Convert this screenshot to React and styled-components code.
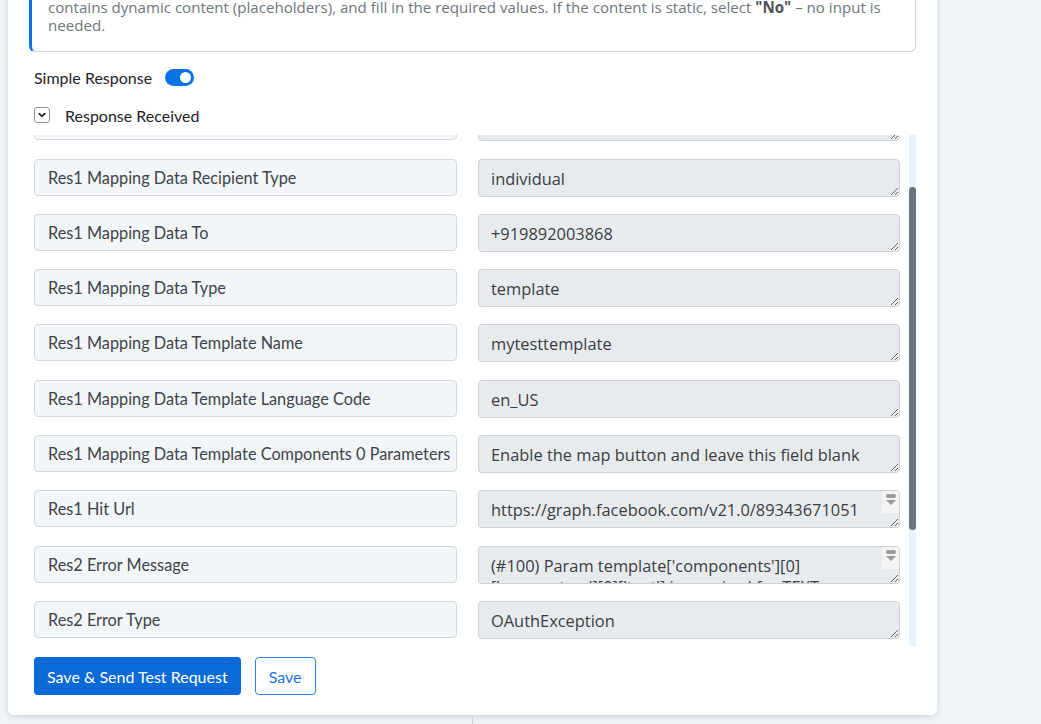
import React, { useLayoutEffect, useRef } from "react";
import styled, { createGlobalStyle } from "styled-components";

const GlobalStyle = createGlobalStyle`
  html, body {
    margin: 0;
    padding: 0;
    background: #f1f4f8;
    overflow: hidden;
  }
  body {
    font-family: Lato, "Open Sans", sans-serif;
  }
`;

const rows = [
  { label: "Res1 Mapping Data Messaging Product", value: "whatsapp" },
  { label: "Res1 Mapping Data Preview Url", value: "false" },
  { label: "Res1 Mapping Data Recipient Type", value: "individual" },
  { label: "Res1 Mapping Data To", value: "+919892003868" },
  { label: "Res1 Mapping Data Type", value: "template" },
  { label: "Res1 Mapping Data Template Name", value: "mytesttemplate" },
  { label: "Res1 Mapping Data Template Language Code", value: "en_US" },
  {
    label: "Res1 Mapping Data Template Components 0 Parameters",
    value: "Enable the map button and leave this field blank",
  },
  {
    label: "Res1 Hit Url",
    value: "https://graph.facebook.com/v21.0/89343671051",
    scroll: true,
  },
  {
    label: "Res2 Error Message",
    value:
      "(#100) Param template['components'][0]['parameters'][0]['text'] is required for TEXT parameter type",
    scroll: true,
  },
  { label: "Res2 Error Type", value: "OAuthException" },
  { label: "Res2 Error Code", value: "100" },
  { label: "Res2 Error Fbtrace Id", value: "AqW3kd8Yt2sPq0vLm1nXz9r" },
  { label: "Res2 Error Is Transient", value: "false" },
];

const App = () => {
  const listRef = useRef(null);

  useLayoutEffect(() => {
    if (listRef.current) listRef.current.scrollTop = 87;
  }, []);

  return (
    <>
      <GlobalStyle />
      <Page>
        <Card>
          <InfoBox>
            contains dynamic content (placeholders), and fill in the required
            values. If the content is static, select <b>"No"</b> – no input is
            needed.
          </InfoBox>

          <ToggleRow>
            <span>Simple Response</span>
            <Switch>
              <Knob />
            </Switch>
          </ToggleRow>

          <CollapseRow>
            <ChevronBox>
              <svg width="10" height="10" viewBox="0 0 10 10">
                <path
                  d="M2.2 3.6 L5 6.4 L7.8 3.6"
                  fill="none"
                  stroke="#1f2328"
                  strokeWidth="1.6"
                  strokeLinecap="round"
                  strokeLinejoin="round"
                />
              </svg>
            </ChevronBox>
            <span>Response Received</span>
          </CollapseRow>

          <ListFrame>
            <ListBody ref={listRef}>
              {rows.map((r) => (
                <Row key={r.label}>
                  <LabelField>{r.label}</LabelField>
                  <ValueWrap>
                    <ValueField readOnly value={r.value} rows={1} />
                    {r.scroll && (
                      <ScrollHint>
                        <svg width="14" height="14" viewBox="0 0 14 14">
                          <rect x="2" y="0" width="10" height="4" rx="2" fill="#9a9a9a" />
                          <path d="M2 6 H12 L7 11 Z" fill="#9a9a9a" />
                        </svg>
                      </ScrollHint>
                    )}
                  </ValueWrap>
                </Row>
              ))}
            </ListBody>
            <ScrollTrack>
              <ScrollThumb $top={52} $height={343} />
            </ScrollTrack>
          </ListFrame>

          <Actions>
            <PrimaryButton>Save &amp; Send Test Request</PrimaryButton>
            <OutlineButton>Save</OutlineButton>
          </Actions>
        </Card>
        <Divider />
      </Page>
    </>
  );
};

const Page = styled.div`
  padding-left: 8px;
  width: 929px;
`;

const Card = styled.div`
  margin-top: -12px;
  background: #ffffff;
  border-radius: 0 0 6px 6px;
  box-shadow: 0 2px 6px rgba(60, 80, 120, 0.18);
  padding: 0 21px 20px 21px;
`;

const InfoBox = styled.div`
  border: 1px solid #c9d1dc;
  border-left: 3px solid #0b74e5;
  border-radius: 0 0 6px 6px;
  padding: 10px 16px 17px 16px;
  font-family: "Open Sans", sans-serif;
  font-size: 15.1px;
  line-height: 17.5px;
  color: #70757c;

  b {
    color: #4d5157;
    font-weight: 700;
  }
`;

const ToggleRow = styled.div`
  display: flex;
  align-items: center;
  gap: 13px;
  margin-top: 15px;
  padding-left: 5px;
  height: 20px;
  font-size: 16px;
  color: #1f2328;
`;

const Switch = styled.div`
  width: 29px;
  height: 17px;
  border-radius: 9px;
  background: #0b74e5;
  position: relative;
`;

const Knob = styled.div`
  position: absolute;
  right: 3px;
  top: 3px;
  width: 11px;
  height: 11px;
  border-radius: 50%;
  background: #ffffff;
`;

const CollapseRow = styled.div`
  display: flex;
  align-items: center;
  gap: 15px;
  margin-top: 18px;
  padding-left: 5px;
  height: 20px;
  font-size: 16px;
  color: #1f2328;
`;

const ChevronBox = styled.div`
  width: 14px;
  height: 14px;
  border: 1px solid #8d939a;
  border-radius: 3px;
  display: flex;
  align-items: center;
  justify-content: center;
`;

const ListFrame = styled.div`
  display: flex;
  gap: 9px;
  margin-top: 10px;
  height: 512px;
  padding-left: 5px;
`;

const ListBody = styled.div`
  flex: 1;
  overflow: hidden;
`;

const ScrollTrack = styled.div`
  width: 7px;
  background: #eaf2fd;
  display: flex;
  flex-direction: column;
`;

const ScrollThumb = styled.div`
  margin-top: ${(p) => p.$top}px;
  height: ${(p) => p.$height}px;
  border-radius: 4px;
  background: #6c757d;
`;

const Row = styled.div`
  display: grid;
  grid-template-columns: 423px 422px;
  column-gap: 21px;
  margin-bottom: 17.3px;
`;

const LabelField = styled.div`
  box-sizing: border-box;
  height: 37px;
  display: flex;
  align-items: center;
  padding: 0 13px;
  background: #f3f6f9;
  border: 1px solid #d3d8de;
  border-radius: 4px;
  font-size: 16.3px;
  color: #3f444a;
  white-space: nowrap;
  overflow: hidden;
`;

const ValueWrap = styled.div`
  position: relative;
  display: flex;
`;

const ValueField = styled.textarea`
  box-sizing: border-box;
  width: 100%;
  height: 38px;
  margin: 0;
  padding: 8px 22px 8px 12px;
  background: #e8ebee;
  border: 1px solid #cdd2d8;
  border-radius: 4px;
  font-family: "Open Sans", sans-serif;
  font-size: 16.4px;
  line-height: 21px;
  color: #3b3e42;
  resize: vertical;
  overflow: hidden;
  outline: none;
`;

const ScrollHint = styled.div`
  position: absolute;
  top: 1px;
  right: 1px;
  width: 17px;
  height: 22px;
  background: #f4f4f4;
  border-top-right-radius: 3px;
  display: flex;
  justify-content: center;
  padding-top: 3px;
  box-sizing: border-box;
`;

const Actions = styled.div`
  display: flex;
  gap: 14px;
  margin-top: 10px;
  padding-left: 5px;
`;

const PrimaryButton = styled.button`
  height: 38px;
  padding: 0 13px;
  background: #0a6ad8;
  color: #ffffff;
  border: none;
  border-radius: 4px;
  font-family: Lato, sans-serif;
  font-size: 16px;
  cursor: pointer;
`;

const OutlineButton = styled.button`
  height: 38px;
  padding: 0 13px;
  background: #ffffff;
  color: #1a73e8;
  border: 1px solid #2f80ed;
  border-radius: 4px;
  font-family: Lato, sans-serif;
  font-size: 16px;
  cursor: pointer;
`;

const Divider = styled.div`
  margin-left: 464px;
  height: 20px;
  border-left: 1px solid #cfd5dd;
`;

export default App;
